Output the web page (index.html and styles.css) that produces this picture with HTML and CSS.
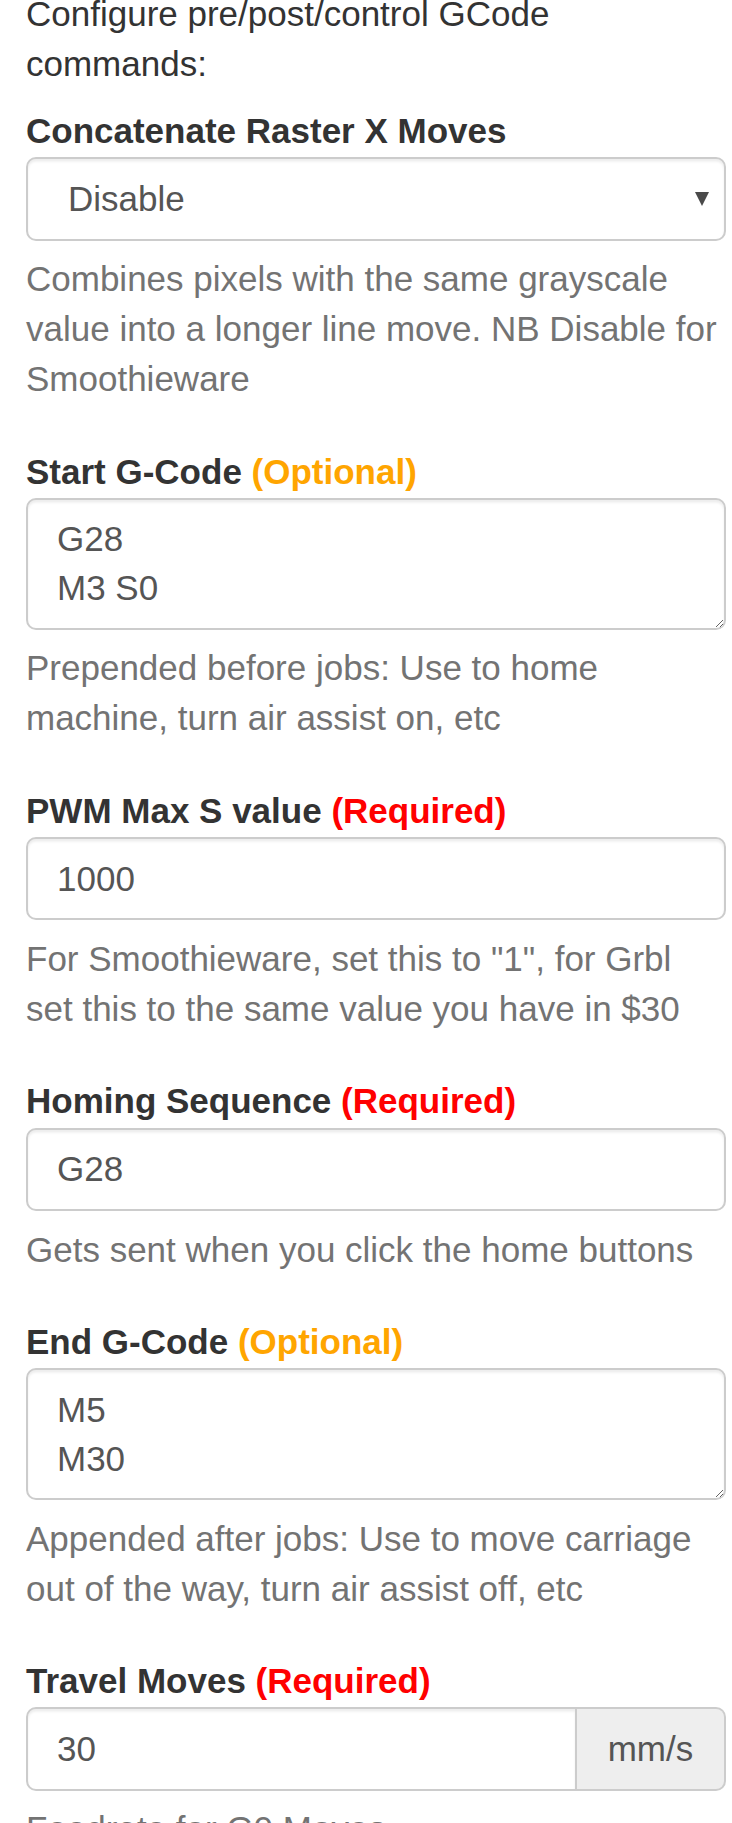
FILE: index.html
```html
<!DOCTYPE html>
<html>
<head>
<meta charset="utf-8">
<link rel="stylesheet" href="styles.css">
</head>
<body>
<div class="page">
  <p class="intro">Configure pre/post/control GCode commands:</p>

  <div class="group">
    <label class="label">Concatenate Raster X Moves</label>
    <div class="select-wrap">
      <select class="control select"><option>Disable</option></select>
    </div>
    <p class="help">Combines pixels with the same grayscale value into a longer line move. NB Disable for Smoothieware</p>
  </div>

  <div class="group">
    <label class="label">Start G-Code <span class="optional">(Optional)</span></label>
    <textarea class="control area" rows="2">G28
M3 S0</textarea>
    <p class="help">Prepended before jobs: Use to home machine, turn air assist on, etc</p>
  </div>

  <div class="group">
    <label class="label">PWM Max S value <span class="required">(Required)</span></label>
    <input class="control" type="text" value="1000">
    <p class="help">For Smoothieware, set this to "1", for Grbl set this to the same value you have in $30</p>
  </div>

  <div class="group">
    <label class="label">Homing Sequence <span class="required">(Required)</span></label>
    <input class="control" type="text" value="G28">
    <p class="help">Gets sent when you click the home buttons</p>
  </div>

  <div class="group">
    <label class="label">End G-Code <span class="optional">(Optional)</span></label>
    <textarea class="control area" rows="2">M5
M30</textarea>
    <p class="help">Appended after jobs: Use to move carriage out of the way, turn air assist off, etc</p>
  </div>

  <div class="group">
    <label class="label">Travel Moves <span class="required">(Required)</span></label>
    <div class="input-group">
      <input class="control grow" type="text" value="30">
      <span class="addon">mm/s</span>
    </div>
    <p class="help">Feedrate for G0 Moves</p>
  </div>
</div>
</body>
</html>
```

FILE: styles.css
```css
html, body {
  margin: 0;
  padding: 0;
  background: #fff;
}

body {
  font-family: "Liberation Sans", Arial, Helvetica, sans-serif;
  font-size: 35px;
  line-height: 50px;
  color: #333;
  overflow: hidden;
}

.page {
  padding: 0 6px 0 26px;
}

.intro {
  margin: -10.8px 0 16.8px 0;
}

.group {
  display: flex;
  flex-direction: column;
}

.label {
  display: block;
  font-weight: bold;
  line-height: 50px;
  margin-bottom: 1.3px;
  color: #333;
}

.optional {
  color: #ffa500;
}

.required {
  color: #ff0000;
}

.control {
  box-sizing: border-box;
  display: block;
  width: 100%;
  height: 83.4px;
  margin: 0;
  padding: 14.5px 29px;
  font-family: "Liberation Sans", Arial, Helvetica, sans-serif;
  font-size: 35px;
  line-height: 49px;
  color: #555;
  background: #fff;
  border: 2px solid #ccc;
  border-radius: 10px;
  box-shadow: inset 0 2.5px 2.5px rgba(0, 0, 0, 0.075);
  outline: none;
}

.select-wrap {
  position: relative;
}

.select {
  -webkit-appearance: none;
  appearance: none;
  padding-left: 40px;
  padding-top: 0;
  padding-bottom: 0;
}

.select-wrap::after {
  content: "";
  position: absolute;
  right: 17px;
  top: 35px;
  width: 0;
  height: 0;
  border-left: 7.5px solid transparent;
  border-right: 7.5px solid transparent;
  border-top: 14px solid #4a4a4a;
}

.area {
  height: 131.7px;
  resize: vertical;
  overflow: hidden;
}

.help {
  margin: 13.5px 0 42.5px 0;
  color: #737373;
}

.input-group {
  display: flex;
}

.grow {
  flex: 1;
  width: auto;
  min-width: 0;
  border-top-right-radius: 0;
  border-bottom-right-radius: 0;
}

.addon {
  box-sizing: border-box;
  display: flex;
  align-items: center;
  justify-content: center;
  height: 83.4px;
  width: 149px;
  padding: 0 30px;
  color: #555;
  background: #eee;
  border: 2px solid #ccc;
  border-left: 0;
  border-radius: 0 10px 10px 0;
}
```
